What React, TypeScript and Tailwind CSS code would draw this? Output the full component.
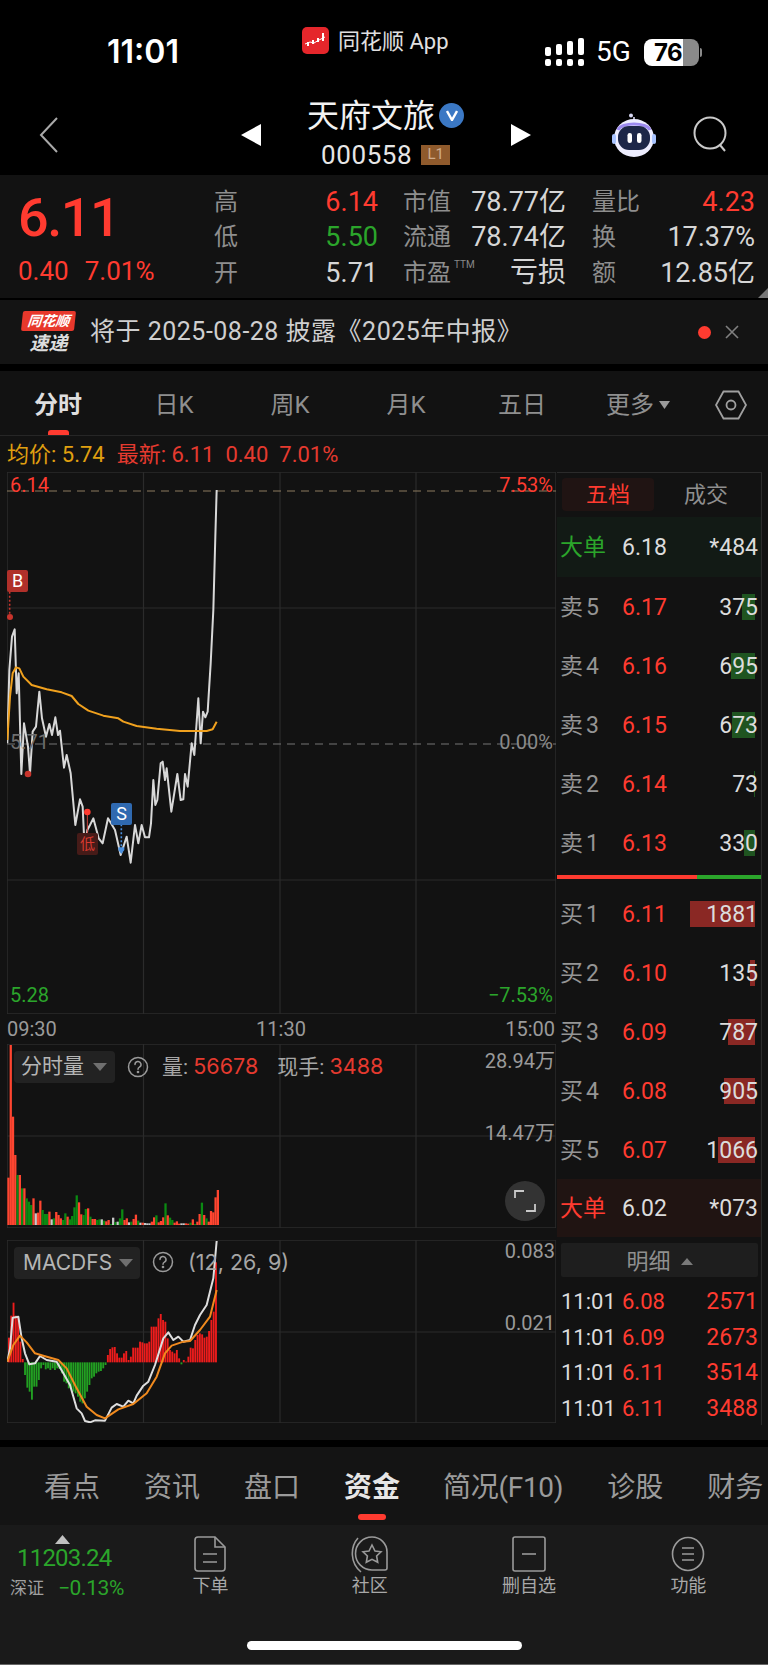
import React from "react";

const whitePts = "22,820 28,600 36,500 44,478 50,670 56,610 64,912 72,760 84,830 90,910 98,785 108,770 118,665 126,745 138,800 148,762 156,795 166,742 174,795 180,782 192,893 200,855 212,910 226,1065 240,988 248,1010 254,1140 262,1080 270,1065 280,1045 296,1105 308,1120 324,1045 345,1080 362,1155 380,1100 392,1178 405,1065 415,1120 425,1065 435,1102 447,1102 453,1060 460,930 466,1005 472,990 482,880 488,875 495,930 500,895 514,1025 532,912 542,990 550,988 555,912 563,950 575,820 583,855 595,685 602,820 609,725 616,742 623,725 632,580 640,420 646,200 650,60";
const orangePts = "22,810 30,680 38,610 48,592 58,595 70,620 95,645 140,658 185,667 215,678 235,702 265,722 310,737 355,745 370,755 410,768 470,776 540,783 620,783 638,778 650,755";
const macdWhite = "22,410 30,370 38,278 55,275 65,340 75,385 88,418 105,415 120,393 140,405 170,410 190,445 210,480 230,550 245,565 255,588 270,592 285,586 315,587 335,548 350,537 370,545 385,527 400,535 410,512 430,482 445,470 465,420 490,340 505,322 520,345 535,335 550,350 570,345 585,300 600,270 620,240 640,160 650,48";
const macdOrange = "22,410 40,360 60,332 80,352 105,385 130,392 175,405 200,430 230,490 260,545 290,570 315,580 355,553 400,537 440,505 470,455 495,385 515,362 550,350 570,348 600,315 630,275 650,195";

const volData = "r443 r45 r260 r375 g435 r435 g475 r475 g505 g515 g525 r505 w550 r548 r512 g540 g552 g552 r545 w568 g565 r546 r555 r565 g570 g550 r560 g568 g558 g532 g496 r517 r553 g555 g537 r535 g560 r567 r567 g570 g568 w568 g572 r574 r570 g582 w563 g576 w575 g565 g538 r570 r565 w577 g575 r567 r554 g572 w578 r578 w579 w580 w580 r575 r562 g556 r577 r573 r562 g520 r556 g563 g570 r578 r574 r581 w580 w580 r580 r581 g578 r568 g582 r575 r552 g518 r555 g565 r575 r543 r547 r502 r480".split(" ");
const volColor: Record<string, string> = { r: "#ff4530", g: "#0b8a12", w: "#c9c9c9" };

const macdBars = [338, 272, 233, 272, 275, 350, 402, 450, 488, 500, 524, 485, 485, 465, 430, 420, 433, 430, 435, 430, 435, 430, 432, 445, 470, 475, 490, 490, 500, 505, 515, 530, 535, 520, 500, 480, 460, 455, 445, 440, 438, 430, 420, 390, 372, 367, 366, 385, 398, 398, 385, 378, 405, 395, 368, 368, 368, 350, 352, 355, 355, 350, 305, 305, 305, 280, 267, 285, 290, 340, 375, 380, 385, 375, 400, 418, 405, 410, 395, 368, 370, 345, 330, 325, 328, 338, 335, 318, 285, 260, 112];

const quoteRows = [
  { a: "高", b: "6.14", bc: "text-[#ff3b30]", c: "市值", cw: "w-[62px]", d: "78.77亿", dw: "w-[101px] text-[27px]", e: "量比", f: "4.23", fc: "text-[#ff3b30]" },
  { a: "低", b: "5.50", bc: "text-[#2ba52b]", c: "流通", cw: "w-[62px]", d: "78.74亿", dw: "w-[101px] text-[27px]", e: "换", f: "17.37%", fc: "text-[#d6d6d6]" },
  { a: "开", b: "5.71", bc: "text-[#d6d6d6]", c: "市盈", cw: "w-[88px]", d: "亏损", dw: "w-[75px] text-[28px]", e: "额", f: "12.85亿", fc: "text-[#d6d6d6]" },
];

const sellRows = [
  { l: "卖", n: "5", p: "6.17", q: "375", w: "w-[13px]" },
  { l: "卖", n: "4", p: "6.16", q: "695", w: "w-[24px]" },
  { l: "卖", n: "3", p: "6.15", q: "673", w: "w-[23px]" },
  { l: "卖", n: "2", p: "6.14", q: "73", w: "w-[1px]" },
  { l: "卖", n: "1", p: "6.13", q: "330", w: "w-[11px]" },
];
const buyRows = [
  { l: "买", n: "1", p: "6.11", q: "1881", w: "w-[65px]" },
  { l: "买", n: "2", p: "6.10", q: "135", w: "w-[5px]" },
  { l: "买", n: "3", p: "6.09", q: "787", w: "w-[27px]" },
  { l: "买", n: "4", p: "6.08", q: "905", w: "w-[31px]" },
  { l: "买", n: "5", p: "6.07", q: "1066", w: "w-[37px]" },
];
const ticks = [
  { p: "6.08", v: "2571" },
  { p: "6.09", v: "2673" },
  { p: "6.11", v: "3514" },
  { p: "6.11", v: "3488" },
];

function Line({ pts, color, width }: { pts: string; color: string; width: number }) {
  return <polyline points={pts} fill="none" stroke={color} strokeWidth={width} strokeLinejoin="round" vectorEffect="non-scaling-stroke" />;
}

function GridLine({ x1, y1, x2, y2, dash, color = "#2b2b2b" }: { x1: number; y1: number; x2: number; y2: number; dash?: string; color?: string }) {
  return <line x1={x1} y1={y1} x2={x2} y2={y2} stroke={color} strokeWidth={1.2} strokeDasharray={dash} vectorEffect="non-scaling-stroke" />;
}

function Grid({ top, bottom, mid }: { top: number; bottom: number; mid: number }) {
  return (
    <>
      <rect x={21} y={top} width={1647} height={bottom - top} fill="none" stroke="#2b2b2b" strokeWidth={1.5} vectorEffect="non-scaling-stroke" />
      <GridLine x1={430.5} y1={top} x2={430.5} y2={bottom} />
      <GridLine x1={840} y1={top} x2={840} y2={bottom} />
      <GridLine x1={1248} y1={top} x2={1248} y2={bottom} />
      <GridLine x1={21} y1={mid} x2={1668} y2={mid} />
    </>
  );
}

function Help() {
  return (
    <svg width="22" height="22" viewBox="0 0 22 22" fill="none" stroke="#9a9a9a" strokeWidth="1.5">
      <circle cx="11" cy="11" r="9.5" />
      <path d="M8 8.6a3 3 0 1 1 4.4 2.6c-.9.5-1.4 1-1.4 2" strokeLinecap="round" />
      <circle cx="11" cy="16" r=".6" fill="#9a9a9a" />
    </svg>
  );
}

function Caret() {
  return <svg width="14" height="8" viewBox="0 0 14 8"><path d="M0 0h14L7 8z" fill="#6f6f6f" /></svg>;
}

function OrderRow({ l, n, p, q, w, bar }: { l: string; n: string; p: string; q: string; w: string; bar: string }) {
  return (
    <div className="flex h-[59px] items-center pl-[3px] pr-[3px] text-[23px]">
      <span className="w-[62px] pt-[4px] text-[#959595]">{l}<span className="ml-[3px]">{n}</span></span>
      <span className="w-[56px] pt-[4px] text-[#ff3b30]">{p}</span>
      <div className="relative flex h-[26px] flex-1 items-center justify-end text-[#dcdcdc]">
        <div className={`absolute right-[3px] top-0 h-[26px] ${w} ${bar}`} />
        <span className="relative pt-[3px]">{q}</span>
      </div>
    </div>
  );
}

function Robot() {
  return (
    <svg width="46" height="46" viewBox="0 0 46 46">
      <path d="M23 9V5" stroke="#d9d9f5" strokeWidth="1.6" />
      <circle cx="20" cy="3.5" r="2" fill="#d9d9f5" />
      <ellipse cx="23" cy="26" rx="20" ry="19" fill="#eeeeff" />
      <path d="M7 18C10 10 36 10 39 18" stroke="#9d8bf0" strokeWidth="3" fill="none" />
      <rect x="7" y="14" width="32" height="24" rx="11" fill="#1d2748" />
      <rect x="16.5" y="21" width="4.5" height="10" rx="2.2" fill="#fff" />
      <rect x="26" y="21" width="4.5" height="10" rx="2.2" fill="#fff" />
      <rect x="1" y="22" width="4" height="10" rx="2" fill="#a9c4ff" />
      <rect x="41" y="22" width="4" height="10" rx="2" fill="#a9c4ff" />
    </svg>
  );
}

function NavItem({ label, children }: { label: string; children: React.ReactNode }) {
  return (
    <div className="flex w-[159.5px] flex-col items-center">
      <div className="flex h-[38px] items-center justify-center">{children}</div>
      <span className="mt-[1px] text-[18px] leading-[24px] text-[#a8a8a8]">{label}</span>
    </div>
  );
}

export default function App() {
  return (
    <div className="flex h-[1665px] w-[768px] flex-col overflow-hidden bg-black font-[Roboto,'Noto_Sans_CJK_SC',sans-serif]">
      {/* Status bar */}
      <div className="flex h-[85px] shrink-0 items-start text-white">
        <div className="ml-[107px] mt-[33px] w-[195px] font-[Inter,sans-serif] text-[32px] font-semibold leading-[38px]">11:01</div>
        <div className="mt-[27px] flex h-[27px] w-[243px] items-center">
          <svg width="27" height="27" viewBox="0 0 27 27">
            <rect width="27" height="27" rx="5" fill="#e5262b" />
            <path d="M3 17l5-2 4 1 5-3 6-3" stroke="#fff" strokeWidth="1" fill="none" />
            <path d="M5 15h2v4H5zM10 13h2v4h-2zM15 11h2v4h-2zM20 6h2v8h-2z" fill="#fff" />
          </svg>
          <span className="ml-[9px] pt-[2px] text-[22px] leading-[27px] text-[#e0e0e0]">同花顺 App</span>
        </div>
        <div className="mt-[38px] flex items-center">
          <svg width="40" height="28" viewBox="0 0 40 28" fill="#fff">
            <rect x="0" y="9" width="6" height="9" rx="2" /><rect x="0" y="21" width="6" height="7" rx="2" />
            <rect x="11" y="6" width="6" height="11" rx="2" /><rect x="11" y="21" width="6" height="7" rx="2" />
            <rect x="22" y="3" width="6" height="14" rx="2" /><rect x="22" y="21" width="6" height="7" rx="2" />
            <rect x="33" y="0" width="6" height="17" rx="2" /><rect x="33" y="21" width="6" height="7" rx="2" />
          </svg>
          <span className="ml-[11px] w-[48px] text-[28px] leading-[28px]">5G</span>
          <div className="relative flex h-[27px] w-[55px] overflow-hidden rounded-[8px]">
            <div className="w-[39px] bg-white" />
            <div className="flex-1 bg-[#8a8a8a]" />
            <span className="absolute left-[10px] top-0 font-[Inter,sans-serif] text-[24px] font-bold leading-[27px] tracking-[-0.5px] text-black">76</span>
          </div>
          <div className="ml-[1px] h-[9px] w-[2px] rounded-r-sm bg-[#8a8a8a]" />
        </div>
      </div>

      {/* Title bar */}
      <div className="flex h-[90px] shrink-0 items-center pt-[9px] text-white">
        <svg className="ml-[39px]" width="20" height="36" viewBox="0 0 20 36" fill="none" stroke="#a9a9a9" strokeWidth="2">
          <path d="M18 1L2 18l16 17" />
        </svg>
        <svg className="ml-[182px]" width="20" height="22" viewBox="0 0 20 22"><path d="M20 0v22L0 11z" fill="#fff" /></svg>
        <div className="-mt-[10px] ml-[46px] flex w-[204px] flex-col">
          <div className="flex h-[50px] items-center">
            <span className="text-[32px] leading-[40px] text-[#f2f2f2]">天府文旅</span>
            <div className="ml-[4px] flex h-[25px] w-[25px] items-center justify-center rounded-full bg-[#3b78c4]">
              <svg width="12" height="11" viewBox="0 0 12 11"><path d="M1 1l5 9 5-9" fill="none" stroke="#fff" strokeWidth="2.4" /></svg>
            </div>
          </div>
          <div className="ml-[14px] flex h-[28px] items-center">
            <span className="text-[26px] leading-[28px] tracking-[0.6px] text-[#e6e6e6]">000558</span>
            <span className="ml-[9px] flex h-[20px] w-[29px] items-center justify-center bg-[#8f5a2c] text-[15px] text-[#d0ad8c]">L1</span>
          </div>
        </div>
        <svg width="20" height="22" viewBox="0 0 20 22"><path d="M0 0v22l20-11z" fill="#fff" /></svg>
        <div className="ml-[80px]"><Robot /></div>
        <svg className="ml-[36px]" width="38" height="38" viewBox="0 0 38 38" fill="none" stroke="#c9c9c9" strokeWidth="2">
          <circle cx="17" cy="17" r="15.5" />
          <path d="M27 29l5 6" />
        </svg>
      </div>

      {/* Quote */}
      <div className="relative flex h-[123px] shrink-0 bg-[#121212]">
        <div className="w-[214px] pl-[18px] pt-[13px]">
          <div className="text-[54px] font-medium leading-[60px] tracking-[-1.5px] text-[#ff3b30]">6.11</div>
          <div className="mt-[8px] flex gap-[16px] text-[26px] leading-[30px] text-[#ff3b30]">
            <span>0.40</span><span>7.01%</span>
          </div>
        </div>
        <div className="flex flex-1 flex-col pt-[9px]">
          {quoteRows.map((r) => (
            <div key={r.a} className="flex h-[35.5px] items-center text-[24px] leading-[30px]">
              <span className="w-[104px] text-[#8e8e8e]">{r.a}</span>
              <span className={`w-[60px] text-right text-[27px] ${r.bc}`}>{r.b}</span>
              <span className={`ml-[25px] flex shrink-0 whitespace-nowrap text-[#8e8e8e] ${r.cw}`}>
                {r.c}
                {r.c === "市盈" ? <span className="ml-[3px] text-[10px] leading-[14px] text-[#888]">TTM</span> : null}
              </span>
              <span className={`whitespace-nowrap text-right text-[#d6d6d6] ${r.dw}`}>{r.d}</span>
              <span className="ml-[26px] w-[50px] text-[#8e8e8e]">{r.e}</span>
              <span className={`w-[113px] whitespace-nowrap text-right text-[27px] ${r.fc}`}>{r.f}</span>
            </div>
          ))}
        </div>
        <svg className="absolute bottom-0 right-0" width="10" height="10" viewBox="0 0 10 10"><path d="M10 0v10H0z" fill="#777" /></svg>
      </div>

      {/* Notice */}
      <div className="mt-[2px] flex h-[64px] shrink-0 items-center bg-[#141414]">
        <div className="ml-[22px] flex w-[53px] flex-col items-center">
          <div className="flex h-[20px] w-[53px] -skew-x-6 items-center justify-center rounded-[2px] bg-[#e8382c] text-[14px] font-bold italic leading-[20px] text-white">同花顺</div>
          <div className="mt-[2px] text-[19px] font-bold italic leading-[21px] text-[#dddddd]">速递</div>
        </div>
        <span className="ml-[15px] w-[608px] text-[25px] leading-[30px] tracking-[0.5px] text-[#cfcfcf]">将于 2025-08-28 披露《2025年中报》</span>
        <div className="h-[13px] w-[13px] rounded-full bg-[#ff3b30]" />
        <svg className="ml-[14px]" width="14" height="14" viewBox="0 0 14 14" stroke="#808080" strokeWidth="1.6"><path d="M1 1l12 12M13 1L1 13" /></svg>
      </div>

      {/* Panel */}
      <div className="mt-[7px] flex h-[1069px] shrink-0 flex-col bg-[#121212]">
        <div className="relative flex h-[65px] shrink-0 items-center border-b border-[#262626] pt-[3px] text-[24px] leading-[30px] text-[#8f8f8f]">
          <span className="w-[116px] text-center font-bold text-[#dedede]">分时</span>
          <span className="w-[116px] text-center">日K</span>
          <span className="w-[116px] text-center">周K</span>
          <span className="w-[116px] text-center">月K</span>
          <span className="w-[116px] text-center">五日</span>
          <span className="flex w-[116px] items-center justify-center">更多<svg className="ml-[5px]" width="11" height="8" viewBox="0 0 11 8"><path d="M0 0h11L5.500 8z" fill="#9a9a9a" /></svg></span>
          <svg className="ml-[19px]" width="32" height="30" viewBox="0 0 32 30" fill="none" stroke="#a0a0a0" strokeWidth="1.8">
            <path d="M8.500 1.500h15L31 15l-7.500 13.500h-15L1 15z" /><circle cx="16" cy="15" r="4.500" />
          </svg>
          <div className="absolute bottom-0 left-[48px] h-[5px] w-[21px] rounded-t-[3px] bg-[#ff3b30]" />
        </div>

        <div className="flex h-[36px] shrink-0 items-center gap-[12px] pl-[7px] pt-[2px] text-[22px] leading-[28px]">
          <span className="text-[#e0a010]">均价: 5.74</span>
          <span className="flex gap-[11px] text-[#e53a2f]"><span>最新: 6.11</span><span>0.40</span><span>7.01%</span></span>
        </div>

        <div className="flex flex-1">
          {/* Left charts */}
          <div className="ml-[7px] flex w-[549px] shrink-0 flex-col">
            <div className="relative h-[542px] shrink-0">
              <svg className="block h-[542px] w-[549px]" viewBox="21 6 1647 1626">
                <Grid top={6} bottom={1632} mid={414} />
                <GridLine x1={21} y1={1230} x2={1668} y2={1230} />
                <GridLine x1={21} y1={63} x2={1668} y2={63} dash="8 6" color="#8c7a5e" />
                <GridLine x1={21} y1={822} x2={1668} y2={822} dash="8 6" color="#757575" />
                <Line pts={whitePts} color="#d8d8d8" width={2} />
                <Line pts={orangePts} color="#f0a11e" width={2} />
                <line x1={29} y1={365} x2={29} y2={440} stroke="#c8342c" strokeWidth={1.6} strokeDasharray="2 2" vectorEffect="non-scaling-stroke" />
                <circle cx={30} cy={441} r={9} fill="#c8342c" />
                <circle cx={84} cy={912} r={10} fill="#c8342c" />
                <line x1={262} y1={1026} x2={262} y2={1100} stroke="#d04038" strokeWidth={1} vectorEffect="non-scaling-stroke" />
                <circle cx={262} cy={1026} r={10} fill="#ff3b30" />
                <line x1={364} y1={1063} x2={364} y2={1135} stroke="#4a90e0" strokeWidth={1.6} strokeDasharray="2 2" vectorEffect="non-scaling-stroke" />
                <path d="M355 1132h18v8l-9 12-9-12z" fill="#4a90e0" />
              </svg>
              <span className="absolute left-[3px] top-[2px] text-[20px] leading-[22px] text-[#ff3b30]">6.14</span>
              <span className="absolute right-[3px] top-[2px] text-[20px] leading-[22px] text-[#ff3b30]">7.53%</span>
              <span className="absolute left-[3px] top-[258px] text-[20px] leading-[24px] text-[#6e6e6e]">5.71</span>
              <span className="absolute right-[3px] top-[259px] text-[20px] leading-[22px] text-[#8a8a8a]">0.00%</span>
              <span className="absolute bottom-[8px] left-[3px] text-[20px] leading-[22px] text-[#2ba52b]">5.28</span>
              <span className="absolute bottom-[8px] right-[3px] text-[20px] leading-[22px] text-[#2ba52b]">−7.53%</span>
              <span className="absolute left-0 top-[98px] flex h-[22px] w-[21px] items-center justify-center rounded-[2px] bg-[#b0302a] text-[18px] leading-[22px] text-white">B</span>
              <span className="absolute left-[70px] top-[361px] flex h-[22px] w-[21px] items-center justify-center rounded-[2px] bg-[#461b18] text-[15px] leading-[22px] text-[#d83a30]">低</span>
              <span className="absolute left-[104px] top-[331px] flex h-[22px] w-[21px] items-center justify-center rounded-[2px] bg-[#2f69b0] text-[18px] leading-[22px] text-white">S</span>
            </div>

            <div className="flex h-[30px] shrink-0 items-center justify-between pr-[1px] text-[20px] leading-[24px] text-[#9a9a9a]">
              <span>09:30</span><span>11:30</span><span>15:00</span>
            </div>

            {/* Volume */}
            <div className="relative h-[184px] shrink-0">
              <svg className="block h-[184px] w-[549px]" viewBox="21 42 1647 552">
                <Grid top={42} bottom={594} mid={318} />
                {volData.map((d, i) => {
                  const top = Number(d.slice(1));
                  const step = 635 / volData.length;
                  return <rect key={i} x={22 + i * step} y={top} width={step} height={585 - top} fill={volColor[d[0]]} />;
                })}
              </svg>
              <div className="absolute left-[7px] top-[7px] flex h-[32px] w-[101px] items-center rounded-[4px] bg-[#222222] pl-[7px] text-[21px] text-[#b5b5b5]">
                分时量<span className="ml-[9px]"><Caret /></span>
              </div>
              <div className="absolute left-[120px] top-[12px]"><Help /></div>
              <div className="absolute left-[155px] top-[7px] flex h-[32px] items-center gap-[19px] text-[21px] text-[#a6a6a6]">
                <span>量: <span className="font-[Inter,sans-serif] text-[21.5px] text-[#e53a2f]">56678</span></span>
                <span>现手: <span className="font-[Inter,sans-serif] text-[21.5px] text-[#e53a2f]">3488</span></span>
              </div>
              <span className="absolute right-[1px] top-[6px] text-[20px] leading-[22px] text-[#9a9a9a]">28.94万</span>
              <span className="absolute right-[1px] top-[78px] text-[20px] leading-[22px] text-[#9a9a9a]">14.47万</span>
              <div className="absolute left-[498px] top-[137px] flex h-[40px] w-[40px] items-center justify-center rounded-full bg-[#333333]">
                <svg width="22" height="22" viewBox="0 0 22 22" fill="none" stroke="#c9c9c9" strokeWidth="1.8">
                  <path d="M1 8V1h9M21 14v7h-9" />
                </svg>
              </div>
            </div>

            <div className="h-[12px] shrink-0" />

            {/* MACD */}
            <div className="relative h-[183px] shrink-0">
              <svg className="block h-[183px] w-[549px]" viewBox="21 45 1647 549">
                <Grid top={45} bottom={594} mid={321} />
                {macdBars.map((t, i) => {
                  const green = (i >= 7 && i <= 42) || i === 75;
                  const y = green ? 412 : t;
                  const h = green ? t - 412 : 412 - t;
                  const step = 628 / macdBars.length;
                  return <rect key={i} x={24 + i * step} y={y} width={5.6} height={Math.max(h, 1)} fill={green ? "#22a022" : "#ee1c1c"} />;
                })}
                <Line pts={macdWhite} color="#dedede" width={2} />
                <Line pts={macdOrange} color="#f08a1e" width={2} />
              </svg>
              <div className="absolute left-[7px] top-[7px] flex h-[32px] w-[126px] items-center rounded-[4px] bg-[#222222] pl-[9px] font-[Inter,sans-serif] text-[21px] text-[#b5b5b5]">
                MACDFS<span className="ml-[7px]"><Caret /></span>
              </div>
              <div className="absolute left-[145px] top-[11px]"><Help /></div>
              <span className="absolute left-[181px] top-[9px] font-[Inter,sans-serif] text-[21.5px] leading-[26px] text-[#a6a6a6]">(12, 26, 9)</span>
              <span className="absolute right-[1px] top-[0px] text-[20px] leading-[22px] text-[#9a9a9a]">0.083</span>
              <span className="absolute right-[1px] top-[72px] text-[20px] leading-[22px] text-[#9a9a9a]">0.021</span>
            </div>
          </div>

          {/* Right panel */}
          <div className="ml-[1px] h-[953px] w-[205px] shrink-0 border-r border-t border-[#2b2b2b]">
            <div className="flex h-[44px] items-start pl-[5px] pt-[5px]">
              <div className="flex h-[33px] w-[92px] items-center justify-center rounded-[4px] bg-[#201413] text-[22px] text-[#ff3b30]">五档</div>
              <div className="flex h-[33px] w-[104px] items-center justify-center text-[22px] text-[#8f8f8f]">成交</div>
            </div>
            <div className="flex h-[60px] items-center bg-[#121a15] pl-[3px] pr-[3px] text-[23px]">
              <span className="w-[62px] pt-[3px] text-[#2ba52b]">大单</span>
              <span className="w-[56px] pt-[3px] text-[#dcdcdc]">6.18</span>
              <span className="flex-1 pt-[3px] text-right text-[#dcdcdc]">*484</span>
            </div>
            {sellRows.map((r) => <OrderRow key={r.n} {...r} bar="bg-[#1f5420]" />)}
            <div className="mt-[3px] flex h-[4px]">
              <div className="w-[140px] bg-[#ff3b30]" />
              <div className="flex-1 bg-[#2ba52b]" />
            </div>
            <div className="h-[5px]" />
            {buyRows.map((r) => <OrderRow key={r.n} {...r} bar="bg-[#8a2824]" />)}
            <div className="flex h-[58px] items-center bg-[#201412] pl-[3px] pr-[3px] text-[23px]">
              <span className="w-[62px] pt-[3px] text-[#ff3b30]">大单</span>
              <span className="w-[56px] pt-[3px] text-[#dcdcdc]">6.02</span>
              <span className="flex-1 pt-[3px] text-right text-[#dcdcdc]">*073</span>
            </div>
            <div className="ml-[4px] mr-[3px] mt-[6px] flex h-[34px] items-center justify-center rounded-[2px] bg-[#1e1e1e] pt-[3px] text-[22px] text-[#8f8f8f]">
              明细
              <svg className="ml-[10px]" width="12" height="7" viewBox="0 0 12 7"><path d="M6 0l6 7H0z" fill="#7a7a7a" /></svg>
            </div>
            <div className="mt-[6px]">
              {ticks.map((t) => (
                <div key={t.v} className="flex h-[35.5px] items-center pl-[4px] pr-[3px] pt-[3px] text-[23px] leading-[28px]">
                  <span className="w-[61px] text-[22px] text-[#dcdcdc]">11:01</span>
                  <span className="text-[22px] text-[#ff3b30]">{t.p}</span>
                  <span className="flex-1 text-right text-[#ff3b30]">{t.v}</span>
                </div>
              ))}
            </div>
          </div>
        </div>
      </div>

      {/* Section tabs */}
      <div className="relative mt-[7px] flex h-[78px] shrink-0 items-center whitespace-nowrap bg-[#141414] pt-[3px] text-[28px] leading-[34px] text-[#9b9b9b]">
        <span className="ml-[44px] shrink-0">看点</span>
        <span className="ml-[44px] shrink-0">资讯</span>
        <span className="ml-[44px] shrink-0">盘口</span>
        <span className="ml-[44px] shrink-0 font-bold text-[#e6e6e6]">资金</span>
        <span className="ml-[43px] shrink-0 tracking-[-0.3px]">简况(F10)</span>
        <span className="ml-[44px] shrink-0">诊股</span>
        <span className="ml-[44px] shrink-0">财务</span>
        <div className="absolute bottom-[5px] left-[358px] h-[6px] w-[28px] rounded-[3px] bg-[#ff3b30]" />
      </div>

      {/* Bottom bar */}
      <div className="flex min-h-0 flex-1 flex-col border-b border-[#666666] bg-[#1a1a1a]">
        <div className="flex h-[116px] shrink-0 pt-[10px]">
          <div className="w-[131px] pl-[10px]">
            <svg className="ml-[45px]" width="15" height="9" viewBox="0 0 15 9"><path d="M7.500 0L15 9H0z" fill="#c0c0c0" /></svg>
            <div className="ml-[7px] text-[24px] leading-[28px] tracking-[-0.8px] text-[#2ba52b]">11203.24</div>
            <div className="mt-[4px] flex items-center text-[17px] leading-[24px] text-[#a0a0a0]">
              深证<span className="ml-[14px] text-[21px] tracking-[-0.4px] text-[#2ba52b]">−0.13%</span>
            </div>
          </div>
          <NavItem label="下单">
            <svg width="32" height="36" viewBox="0 0 32 36" fill="none" stroke="#9a9a9a" strokeWidth="1.6">
              <path d="M4 1h17l10 10v21a3 3 0 0 1-3 3H4a3 3 0 0 1-3-3V4a3 3 0 0 1 3-3z" />
              <path d="M21 1v10h10M9 18h14M9 26h14" />
            </svg>
          </NavItem>
          <NavItem label="社区">
            <svg width="38" height="38" viewBox="0 0 38 38" fill="none" stroke="#9a9a9a" strokeWidth="1.6">
              <path d="M7 3C-1 12 -1 28 10 37" />
              <path d="M21 2a15 15 0 0 1 15 15v16a2 2 0 0 1-2 2H21a15 15 0 0 1 0-33z" />
              <path d="M21 10l3 6 6 .8-4.400 4.200 1.100 6.300-5.700-3-5.700 3 1.100-6.300-4.400-4.200 6-.8z" />
            </svg>
          </NavItem>
          <NavItem label="删自选">
            <svg width="34" height="36" viewBox="0 0 34 36" fill="none" stroke="#9a9a9a" strokeWidth="1.6">
              <rect x="1" y="1" width="32" height="34" rx="2" /><path d="M10 18h14" />
            </svg>
          </NavItem>
          <NavItem label="功能">
            <svg width="34" height="36" viewBox="0 0 34 36" fill="none" stroke="#9a9a9a" strokeWidth="1.6">
              <ellipse cx="17" cy="18" rx="15.500" ry="16.500" /><path d="M11 12h12M11 18h12M11 24h12" />
            </svg>
          </NavItem>
        </div>
        <div className="ml-[247px] h-[9px] w-[275px] rounded-full bg-white" />
      </div>
    </div>
  );
}
